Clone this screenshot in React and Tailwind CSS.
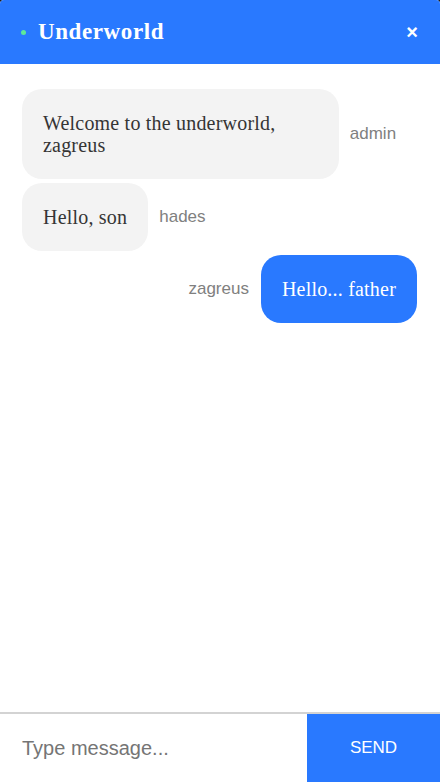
export default function App() {
  return (
    <div className="w-[440px] h-[782px] bg-[#1c1c1c] flex flex-col">
      <div className="flex flex-col h-full bg-white rounded-t-[4px] overflow-hidden">
        <div className="h-[64px] shrink-0 bg-[#2979ff] flex items-center pl-[21px] pr-[22px]">
          <span className="w-[5px] h-[5px] rounded-full bg-[#5ee89a] mr-[12px]" />
          <span className="text-white font-bold text-[23px] tracking-[0.6px] font-['Liberation_Serif',serif]">Underworld</span>
          <span className="ml-auto text-white text-[20px] font-bold font-['Liberation_Sans',sans-serif] leading-none">×</span>
        </div>
        <div className="flex-1 flex flex-col gap-[4px] px-[22px] pt-[25px] min-h-0">
          <div className="flex items-center">
            <div className="max-w-[80%] bg-[#f3f3f3] rounded-[20px] px-[21px] py-[23px] text-[20px] leading-[22px] tracking-[0.2px] text-[#353535] font-['Liberation_Serif',serif]">
              Welcome to the underworld, zagreus
            </div>
            <span className="ml-[11px] text-[17px] text-[#808080] font-['Liberation_Sans',sans-serif]">admin</span>
          </div>
          <div className="flex items-center">
            <div className="max-w-[80%] bg-[#f3f3f3] rounded-[20px] px-[21px] py-[23px] text-[20px] leading-[22px] tracking-[0.2px] text-[#353535] font-['Liberation_Serif',serif]">
              Hello, son
            </div>
            <span className="ml-[11px] text-[17px] text-[#808080] font-['Liberation_Sans',sans-serif]">hades</span>
          </div>
          <div className="flex items-center justify-end pr-[1px]">
            <span className="mr-[12px] text-[17px] text-[#808080] font-['Liberation_Sans',sans-serif]">zagreus</span>
            <div className="max-w-[80%] bg-[#2979ff] rounded-[20px] px-[21px] py-[23px] text-[20px] leading-[22px] tracking-[0.2px] text-white font-['Liberation_Serif',serif]">
              Hello... father
            </div>
          </div>
        </div>
        <div className="h-[70px] shrink-0 border-t-2 border-[#d3d3d3] flex">
          <div className="flex-1 flex items-center pl-[22px] text-[20px] text-[#757575] font-['Liberation_Sans',sans-serif]">
            Type message...
          </div>
          <div className="w-[133px] bg-[#2979ff] flex items-center justify-center text-white text-[17px] font-['Liberation_Sans',sans-serif]">
            SEND
          </div>
        </div>
      </div>
    </div>
  );
}
